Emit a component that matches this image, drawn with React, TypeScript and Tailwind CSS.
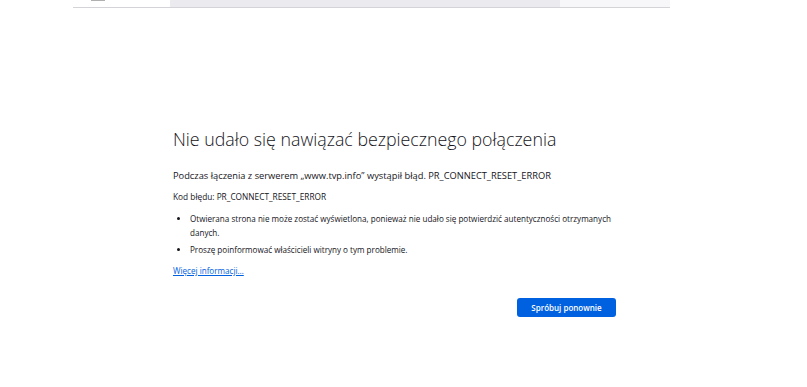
import React from "react";

export default function App() {
  return (
    <div className="w-[807px] h-[387px] bg-white overflow-hidden" style={{ fontFamily: '"Open Sans", "Noto Sans", sans-serif' }}>
      <div className="ml-[73px] w-[597px] h-[8px] flex border-b border-[#d4d4d8] bg-[#f0f0f4]">
        <div className="w-[97px] bg-white flex items-start pl-[18px]">
          <div className="w-[14px] h-[1px] bg-[#b0b0b0]"></div>
        </div>
        <div className="w-[390px] bg-[#ebebef]"></div>
        <div className="flex-1 bg-[#f7f7f9]"></div>
      </div>
      <div className="ml-[173px] w-[444px] pt-[117px] text-[#15141a]">
        <h1 className="text-[17.8px] leading-[28px] font-light">Nie udało się nawiązać bezpiecznego połączenia</h1>
        <p className="mt-[15px] text-[9.3px] leading-[16px]">Podczas łączenia z serwerem „www.tvp.info” wystąpił błąd. PR_CONNECT_RESET_ERROR</p>
        <p className="mt-[6px] text-[8.3px] leading-[14px]">Kod błędu: PR_CONNECT_RESET_ERROR</p>
        <ul className="mt-[8px] text-[8.1px] leading-[14px] list-disc pl-[17px]">
          <li>Otwierana strona nie może zostać wyświetlona, ponieważ nie udało się potwierdzić autentyczności otrzymanych danych.</li>
          <li className="mt-[3px]">Proszę poinformować właścicieli witryny o tym problemie.</li>
        </ul>
        <a href="#" className="block mt-[7px] text-[8.1px] leading-[14px] text-[#0061e0] underline">Więcej informacji…</a>
        <div className="flex justify-end mt-[20px] pr-[1px]">
          <button className="w-[99px] h-[19px] rounded-[3px] bg-[#0061e0] text-white text-[8px] font-semibold">Spróbuj ponownie</button>
        </div>
      </div>
    </div>
  );
}
